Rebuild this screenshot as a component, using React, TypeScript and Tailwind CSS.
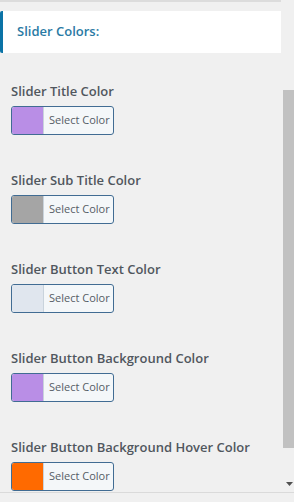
const rows = [
  { label: "Slider Title Color", color: "#b98ee6" },
  { label: "Slider Sub Title Color", color: "#a5a5a5" },
  { label: "Slider Button Text Color", color: "#e0e6ee" },
  { label: "Slider Button Background Color", color: "#b98ee6" },
  { label: "Slider Button Background Hover Color", color: "#ff6a00" },
];

function ColorField({ label, color }: { label: string; color: string }) {
  return (
    <div className="flex flex-col pl-[11px]">
      <div className="h-[22px] text-[13px] leading-[22px] font-semibold text-[#50575e]">{label}</div>
      <button
        type="button"
        className="mt-[4px] flex h-[29px] w-[103px] overflow-hidden rounded-[3px] border border-[#416c93] bg-[#f4f7f9]"
      >
        <span className="h-full w-[31px] shrink-0" style={{ backgroundColor: color }} />
        <span className="flex h-full items-center border-l border-[#c9d3dc] pl-[5px] text-[11px] text-[#555d66]">
          Select Color
        </span>
      </button>
    </div>
  );
}

export default function App() {
  return (
    <div className="flex h-[502px] w-[294px] flex-col overflow-hidden bg-[#f0f0f0] font-['Open_Sans',sans-serif]">
      <div className="flex h-[492px] shrink-0">
        <div className="flex w-[283px] flex-col overflow-hidden">
          <div className="h-[2px] w-[281px] shrink-0 bg-[#dcdcdc]" />
          <div className="mt-[9px] flex h-[42px] w-[281px] shrink-0 items-center rounded-l-[2px] border-l-[3px] border-[#0b73a6] bg-white pl-[14px]">
            <span className="text-[13px] font-semibold text-[#2a7aa4]">Slider Colors:</span>
          </div>
          <div className="mt-[27px] flex flex-col gap-[34px]">
            {rows.map((r) => (
              <ColorField key={r.label} label={r.label} color={r.color} />
            ))}
          </div>
        </div>
        <div className="relative flex w-[11px] flex-col">
          <div className="mt-[90px] h-[358px] w-full bg-[#c1c1c1]" />
          <svg className="absolute top-[482px] left-[3px]" width="7" height="4" viewBox="0 0 7 4">
            <path d="M0 0h7L3.5 4z" fill="#505050" />
          </svg>
        </div>
      </div>
      <div className="h-px w-full bg-[#dadada]" />
    </div>
  );
}
